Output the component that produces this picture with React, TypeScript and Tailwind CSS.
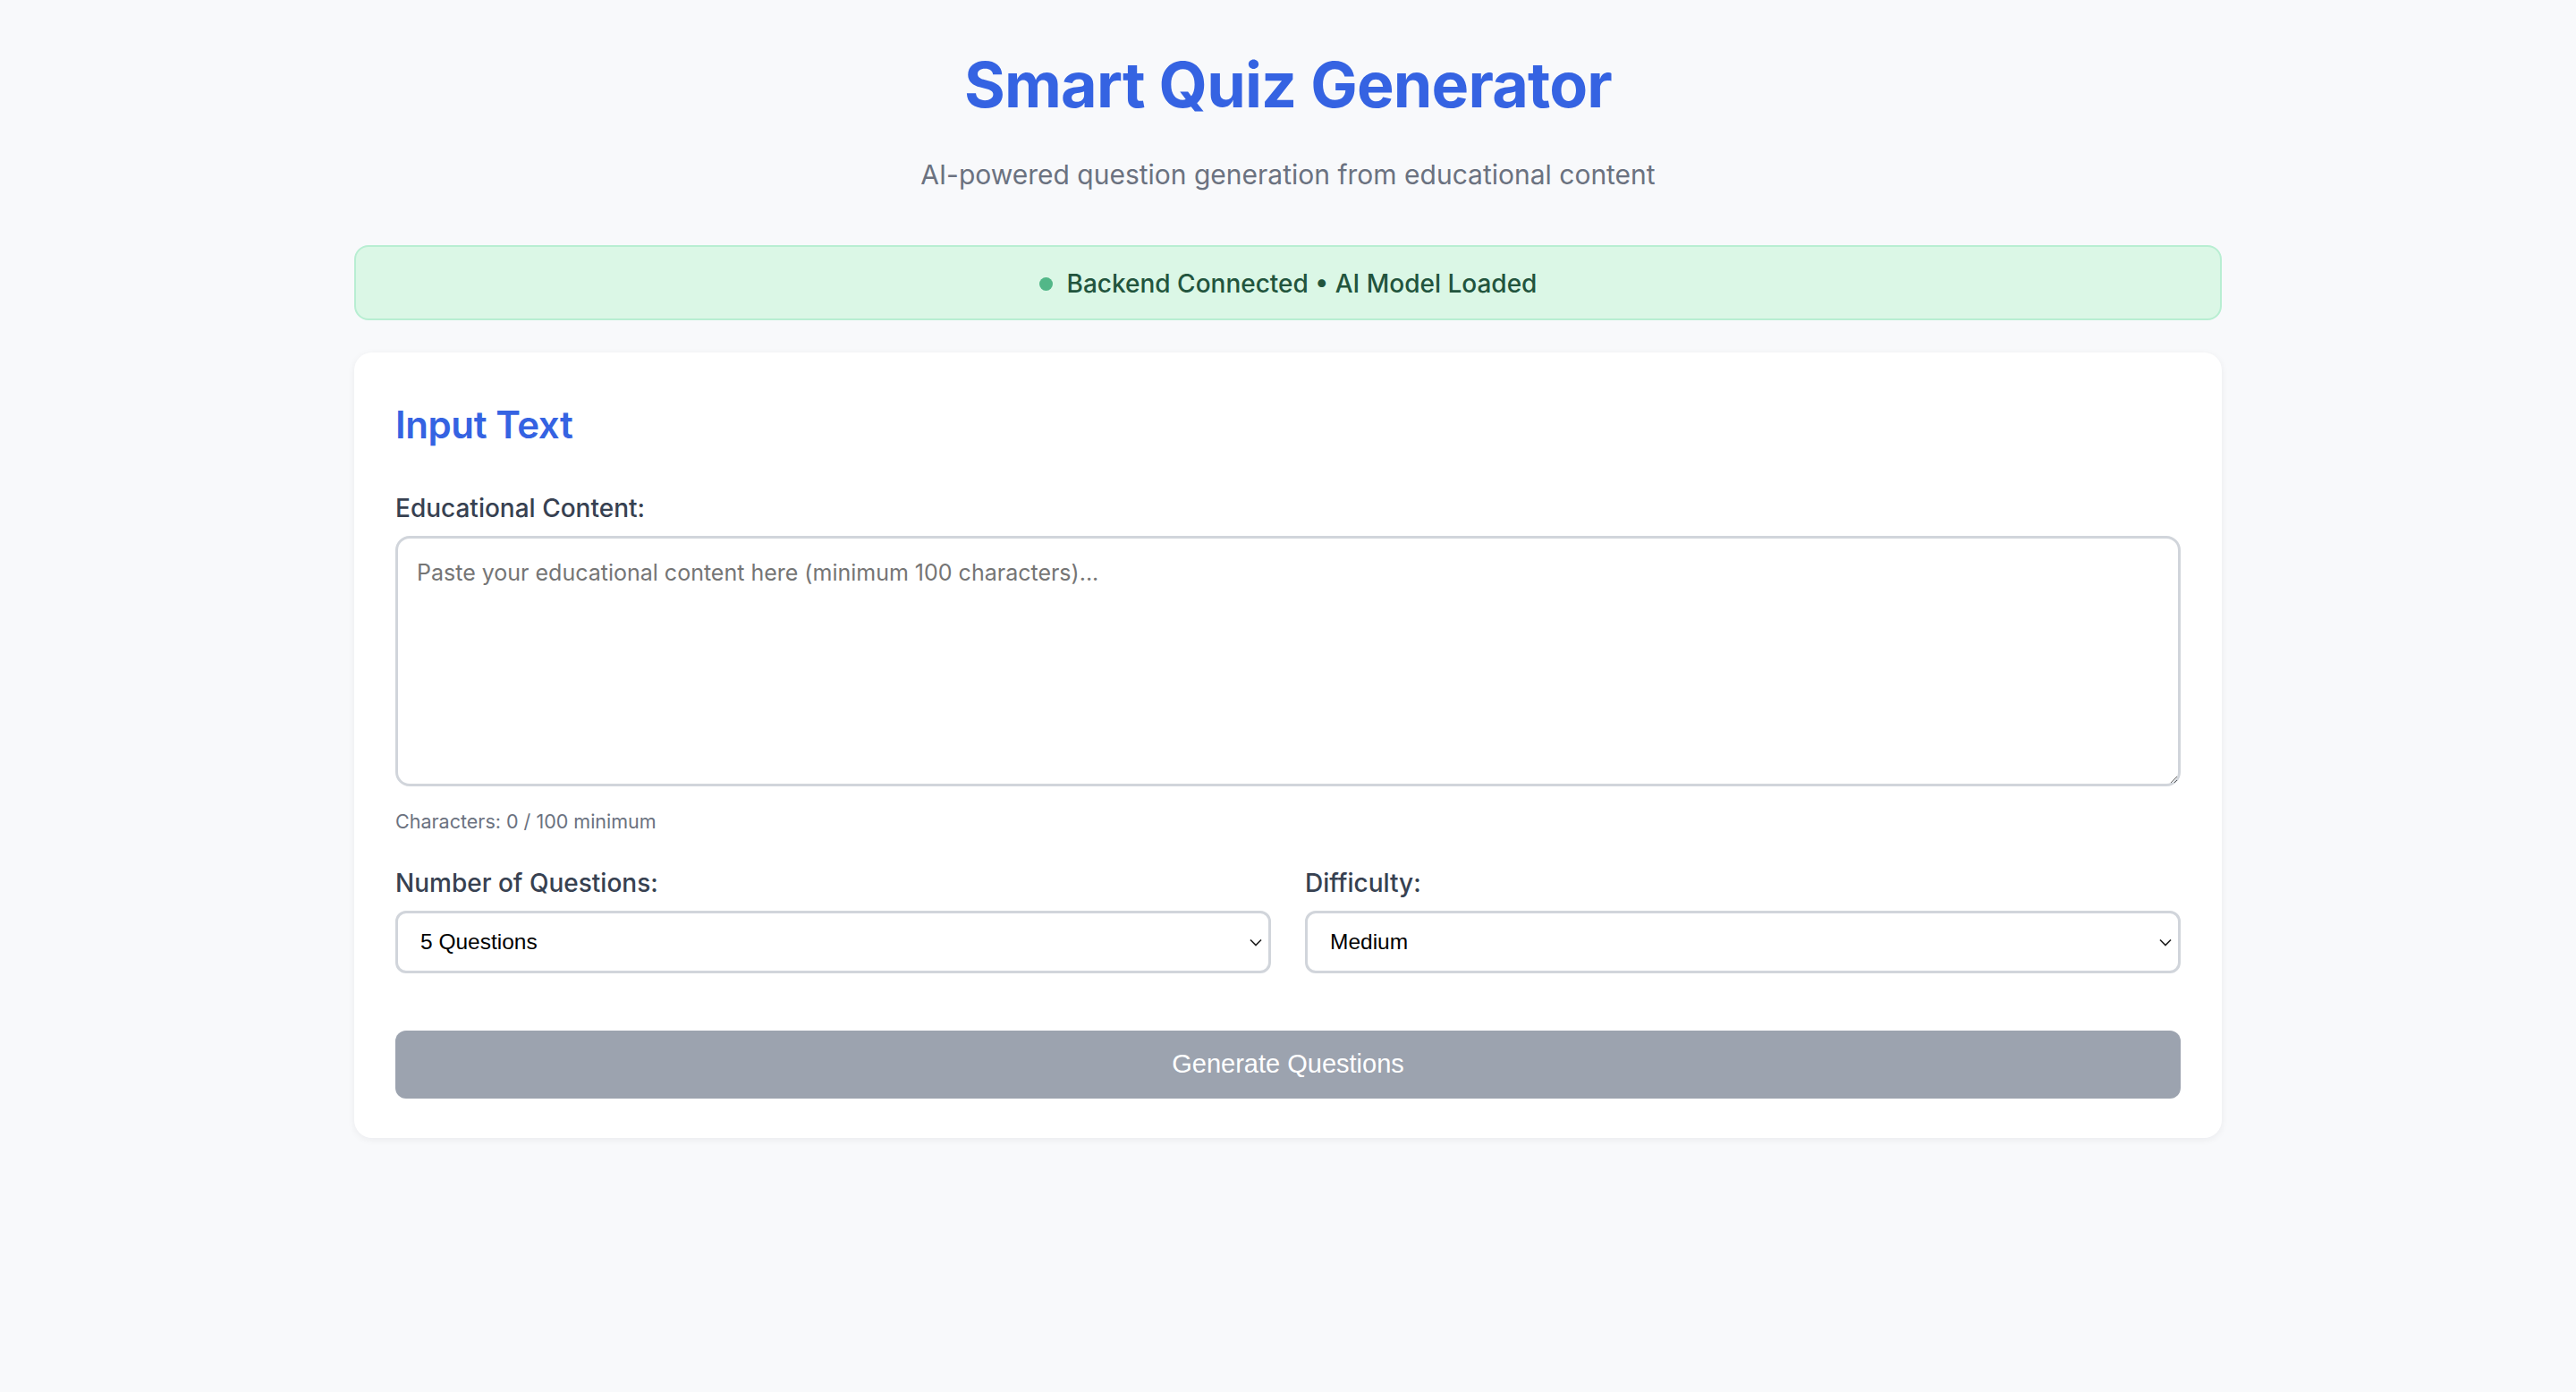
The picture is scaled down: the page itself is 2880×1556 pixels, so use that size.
import React from "react";

const selects = [
  { label: "Number of Questions:", value: "5 Questions", options: ["3 Questions", "5 Questions", "10 Questions"] },
  { label: "Difficulty:", value: "Medium", options: ["Easy", "Medium", "Hard"] },
];

function Chevron() {
  return (
    <svg
      className="pointer-events-none absolute right-[9px] top-1/2 h-[10px] w-[16px] -translate-y-1/2 text-[#222]"
      viewBox="0 0 16 10"
      fill="none"
      stroke="currentColor"
    >
      <path d="M2 2.5l6 6 6-6" strokeWidth="1.7" />
    </svg>
  );
}

export default function App() {
  return (
    <main className="min-h-screen bg-[#f8f9fb] font-['Inter',sans-serif]">
      <div className="mx-auto w-[2088px] pt-[52px] pb-20">
        {/* Header */}
        <header className="text-center">
          <h1 className="text-[70px] font-bold leading-[86px] tracking-[-0.8px] text-[#3563e2]">
            Smart Quiz Generator
          </h1>
          <p className="mt-[33px] text-[30px] leading-[48px] text-[#6b7280]">
            AI-powered question generation from educational content
          </p>
        </header>

        {/* Status */}
        <div className="mt-[55px] flex h-[84px] items-center justify-center gap-[16px] rounded-[16px] border-2 border-[#b8eed2] bg-[#dbf7e6] pt-[2px] text-[28px] font-medium text-[#22543d]">
          <span className="h-[15px] w-[15px] rounded-full bg-[#52b788]" />
          <span>Backend Connected • AI Model Loaded</span>
        </div>

        {/* Input card */}
        <section className="mt-[36px] rounded-[20px] bg-white px-[46px] pt-[51px] pb-[44px] shadow-[0_2px_8px_rgba(15,23,42,0.06)]">
          <h2 className="text-[42px] font-semibold leading-[60px] tracking-[-0.4px] text-[#3563e2]">Input Text</h2>

          <label className="mt-[42px] block text-[28px] font-medium leading-[42px] text-[#374151]">
            Educational Content:
          </label>
          <textarea
            className="mt-[10px] block h-[280px] w-full resize-y rounded-[16px] border-[3px] border-[#d1d5db] bg-white px-[21px] py-[21px] text-[25px] leading-[34px] outline-none placeholder:text-[#757575]"
            placeholder="Paste your educational content here (minimum 100 characters)..."
          />
          <p className="mt-[23px] text-[21.5px] leading-[33px] text-[#6b7280]">Characters: 0 / 100 minimum</p>

          <div className="mt-[31px] grid grid-cols-2 gap-x-[38px]">
            {selects.map((s) => (
              <div key={s.label}>
                <label className="block text-[28px] font-medium leading-[42px] text-[#374151]">{s.label}</label>
                <div className="relative mt-[10px]">
                  <select
                    defaultValue={s.value}
                    className="block h-[70px] w-full appearance-none rounded-[12px] border-[3px] border-[#d1d5db] bg-white px-[25px] font-['Liberation_Sans',Arial,sans-serif] text-[24.5px] text-black outline-none"
                  >
                    {s.options.map((o) => (
                      <option key={o}>{o}</option>
                    ))}
                  </select>
                  <Chevron />
                </div>
              </div>
            ))}
          </div>

          <button
            disabled
            className="mt-[64px] block h-[76px] w-full rounded-[12px] bg-[#9ca3af] font-['Liberation_Sans',Arial,sans-serif] text-[29px] text-white"
          >
            Generate Questions
          </button>
        </section>
      </div>
    </main>
  );
}
